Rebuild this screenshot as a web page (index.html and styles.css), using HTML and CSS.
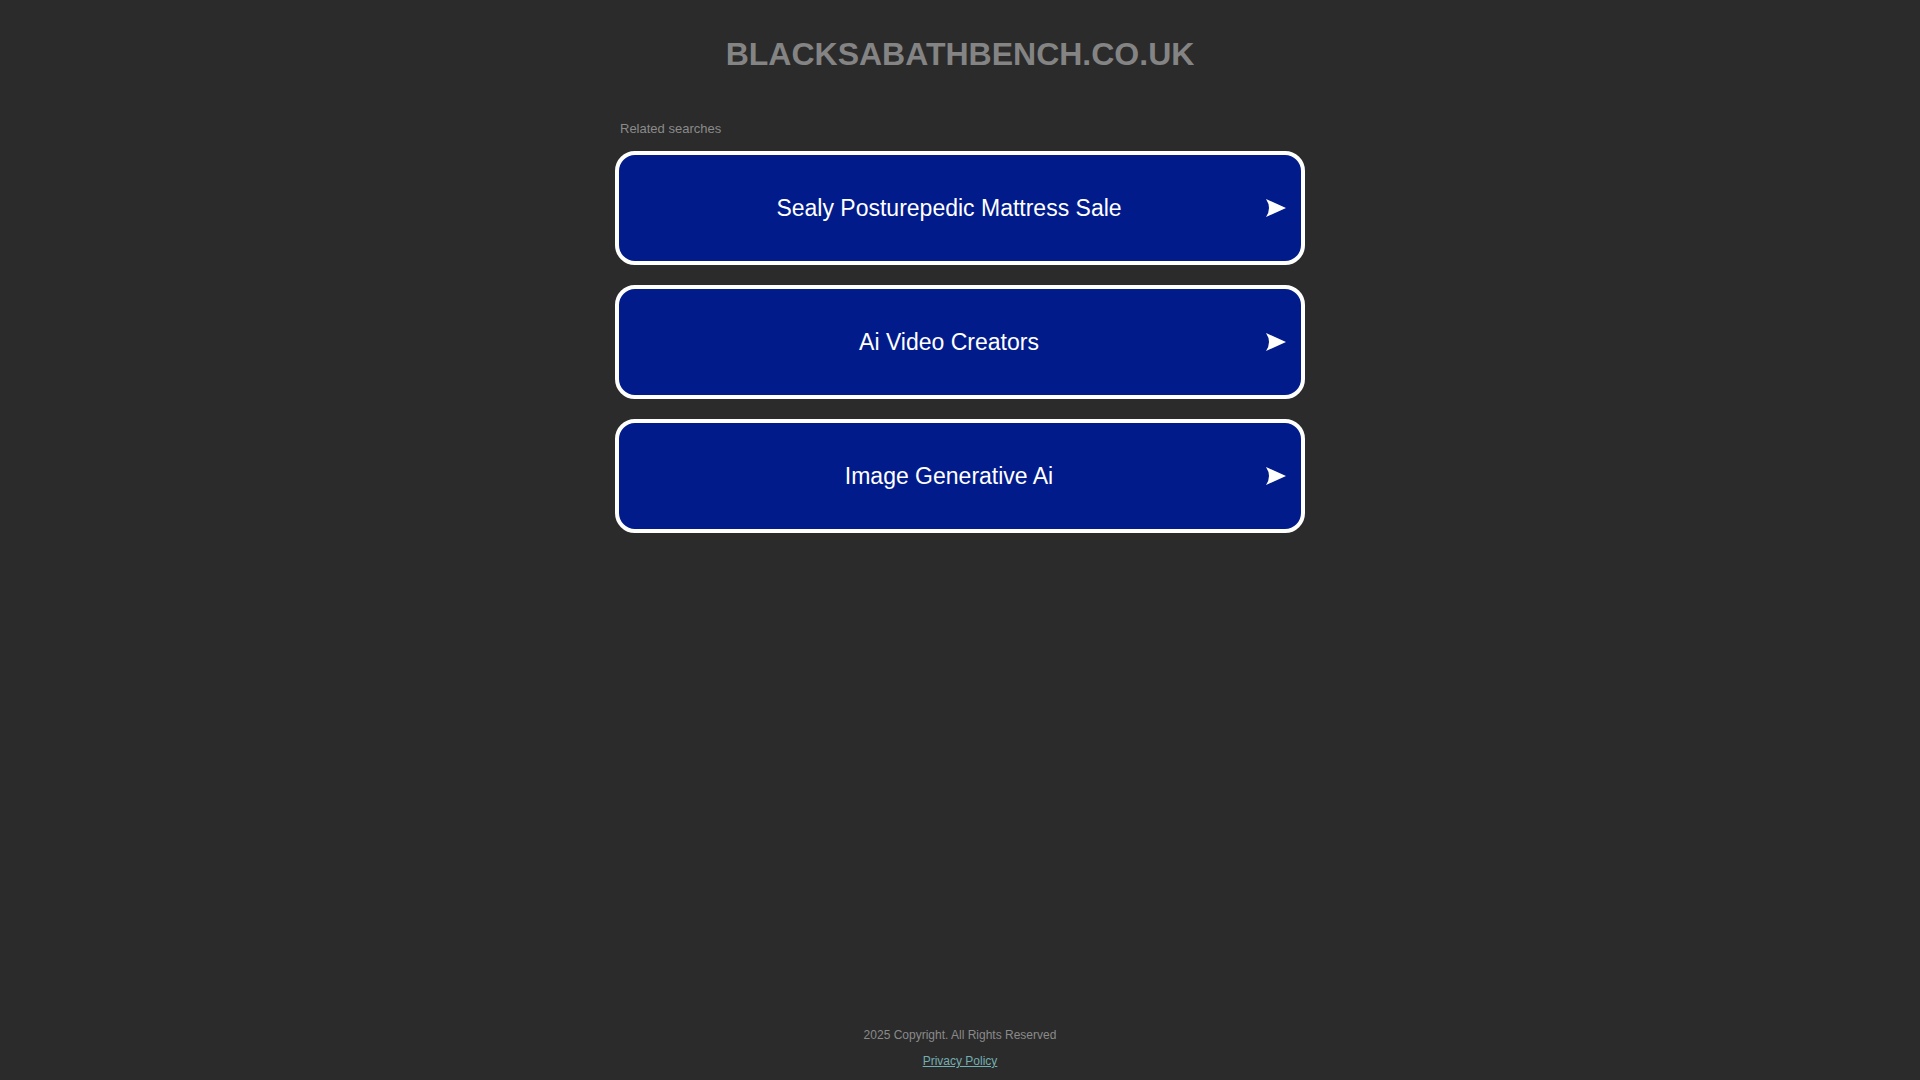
FILE: index.html
```html
<!DOCTYPE html>
<html lang="en">
<head>
<meta charset="utf-8">
<title>blacksabathbench.co.uk</title>
<link rel="stylesheet" href="styles.css">
</head>
<body>
<div class="page">
  <header class="header">
    <h1 class="domain">BLACKSABATHBENCH.CO.UK</h1>
  </header>
  <main class="content">
    <div class="related">Related searches</div>
    <div class="links">
      <a class="link-card" href="#"><span class="link-text">Sealy Posturepedic Mattress Sale</span><svg class="arrow" viewBox="0 0 20 18" width="20" height="18"><path d="M0 0 L20 9 L0 18 Q6 9 0 0 Z" fill="#ffffff"/></svg></a>
      <a class="link-card" href="#"><span class="link-text">Ai Video Creators</span><svg class="arrow" viewBox="0 0 20 18" width="20" height="18"><path d="M0 0 L20 9 L0 18 Q6 9 0 0 Z" fill="#ffffff"/></svg></a>
      <a class="link-card" href="#"><span class="link-text">Image Generative Ai</span><svg class="arrow" viewBox="0 0 20 18" width="20" height="18"><path d="M0 0 L20 9 L0 18 Q6 9 0 0 Z" fill="#ffffff"/></svg></a>
    </div>
  </main>
  <footer class="footer">
    <div class="copyright">2025 Copyright. All Rights Reserved</div>
    <a class="privacy" href="#">Privacy Policy</a>
  </footer>
</div>
</body>
</html>
```
FILE: styles.css
```css
html, body {
  margin: 0;
  padding: 0;
  background: #2b2b2b;
}
body {
  font-family: "Liberation Sans", Arial, Helvetica, sans-serif;
}
.page {
  min-height: 100vh;
  display: flex;
  flex-direction: column;
  align-items: center;
  box-sizing: border-box;
}
.header {
  padding-top: 35px;
}
.domain {
  margin: 0;
  font-size: 32px;
  line-height: 38px;
  font-weight: bold;
  color: #848484;
  text-align: center;
}
.content {
  width: 690px;
  margin-top: 48px;
}
.related {
  font-size: 13px;
  line-height: 16px;
  color: #8a8a8a;
  padding-left: 5px;
  margin-bottom: 14px;
}
.links {
  display: flex;
  flex-direction: column;
  gap: 20px;
}
.link-card {
  position: relative;
  display: flex;
  align-items: center;
  justify-content: center;
  height: 114px;
  box-sizing: border-box;
  border: 4px solid #ffffff;
  border-radius: 20px;
  background: #011b8b;
  color: #ffffff;
  text-decoration: none;
  padding-right: 22px;
}
.link-text {
  font-size: 23px;
  line-height: 28px;
}
.arrow {
  position: absolute;
  right: 15px;
  top: 50%;
  margin-top: -9px;
}
.footer {
  margin-top: auto;
  padding-bottom: 11px;
  display: flex;
  flex-direction: column;
  align-items: center;
  gap: 11px;
}
.copyright {
  font-size: 12px;
  line-height: 15px;
  color: #8a8a8a;
}
.privacy {
  font-size: 12px;
  line-height: 15px;
  color: #74aeb0;
  text-decoration: underline;
}
```
